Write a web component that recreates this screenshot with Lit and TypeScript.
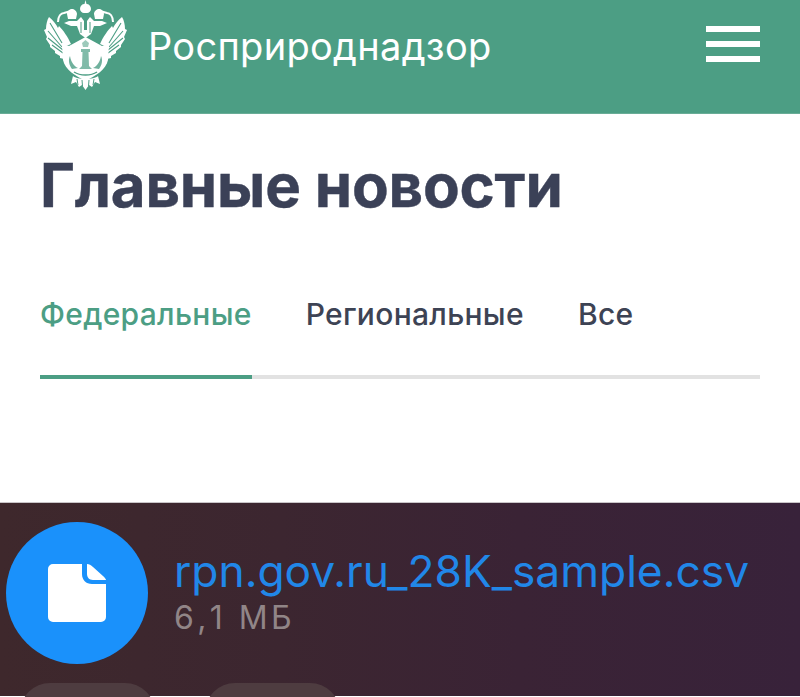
import { LitElement, html, css, svg } from "lit";
import { customElement } from "lit/decorators.js";

const wing = svg`
  <path d="M9 17 C13 20 16 24 18 28 L19 26 C23 30 28 37 31 44 L24 47 L24 59 L20 58 L20 56 L15 53 L15 51 L10 47 L10 45 L6 39 L7 37 L4 30 L6 29 C6 25 7 20 9 17 Z" fill="#fff"/>
  <path d="M10 23 L22 43 M8 31 L22 47 M8 38 L23 50 M12 45 L23 53" stroke="#4c9e84" stroke-width="1.100" fill="none"/>
`;

@customElement("app-root")
export class AppRoot extends LitElement {
  static styles = css`
    :host { display: block; width: 800px; height: 697px; overflow: hidden; background: #fff; font-family: Inter, "Noto Sans", sans-serif; }
    .header { height: 114px; background: #4c9e84; display: flex; align-items: flex-start; padding: 0 40px; box-sizing: border-box; border-bottom: 1px solid #69ac96; }
    .logo { width: 92px; height: 92px; flex: none; }
    .brand { margin: 25px 0 0 16px; flex: 1; color: #fff; font: 400 38px/42px "Inter", sans-serif; letter-spacing: 0.3px; white-space: nowrap; }
    .burger { width: 54px; display: flex; flex-direction: column; gap: 9px; margin-top: 26px; }
    .burger i { display: block; height: 6px; background: #fff; }
    .main { height: 389px; padding: 0 40px; box-sizing: border-box; display: flex; flex-direction: column; }
    h1 { margin: 35px 0 0; color: #3b4157; font: 700 60px/72px "Inter", sans-serif; letter-spacing: -0.2px; white-space: nowrap; -webkit-text-stroke: 0.4px #3b4157; }
    .tabs { margin-top: 75px; display: flex; gap: 54px; font: 500 30px/36px "Inter", sans-serif; letter-spacing: 0.3px; color: #3d4354; border-bottom: 4px solid #e2e2e2; padding-bottom: 43px; }
    .tab { position: relative; }
    .tab.active { color: #4c9e84; }
    .tab.active::after { content: ""; position: absolute; left: 0; right: 0; bottom: -47px; height: 4px; background: #4c9e84; }
    .sheet { height: 194px; margin-top: -1px; background: linear-gradient(90deg, #3e282c 0%, #3c2630 35%, #3a2335 65%, #38223a 100%); box-sizing: border-box; border-top: 1px solid #c9c5c8; padding: 19px 6px 0; }
    .file { display: flex; align-items: flex-start; gap: 26px; }
    .circle { width: 142px; height: 142px; border-radius: 50%; background: #1a91fb; flex: none; display: flex; align-items: center; justify-content: center; }
    .info { padding-top: 23px; }
    .name { color: #2187e8; font: 400 44.3px/52px "Inter", sans-serif; white-space: nowrap; }
    .size { color: #918587; font: 400 32px/36px "Inter", sans-serif; letter-spacing: 3.4px; margin-top: 3px; font-kerning: none; }
    .actions { display: flex; gap: 50px; margin: 19px 0 0 14px; }
    .actions span { display: block; width: 135px; height: 60px; border-radius: 30px; background: #4e3c40; }
  `;

  render() {
    return html`
      <div class="header">
        <svg class="logo" viewBox="0 0 92 92" aria-label="Герб">
          <g>${wing}</g>
          <g transform="translate(91 0) scale(-1 1)">${wing}</g>
          <path d="M18 22 C18 16 21 13 24 13 L31 11 M73 22 C73 16 70 13 67 13 L60 11" stroke="#fff" stroke-width="2" fill="none"/>
          <path d="M45.500 0 L46.500 4 C49 4 51 6 51 9 C51 11 49 13 47 13 H44 C42 13 40 11 40 9 C40 6 42 4 44.500 4 Z" fill="#fff"/>
          <path d="M27 14 C27 11 30 9 32 9 C34 9 37 11 37 14 L36 19 H28 Z M54 14 C54 11 57 9 59 9 C61 9 64 11 64 14 L63 19 H55 Z" fill="#fff"/>
          <path d="M24 23 L29 21 L37 21 L41 17 L44 21 L44 30 L47 30 L47 21 L50 17 L54 21 L62 21 L67 23 L60 26 L54 26 L51 34 L45.500 38 L40 34 L37 26 L31 26 Z" fill="#fff"/>
          <path d="M41 22 L41 33 M50 22 L50 33" stroke="#4c9e84" stroke-width="1"/>
          <path d="M29 46 L45.500 37 L62 46 L69 44 L68 60 C66 70 55 76 45.500 81 C36 76 25 70 23 60 L22 44 Z" fill="#fff"/>
          <path d="M45.500 40 L49 43 L48 47 H43 L42 43 Z" fill="#4c9e84" opacity=".55"/>
          <path d="M41 49 H50 V52 H48.500 L49 66 L52 69 H39 L42 66 L42.500 52 H41 Z" fill="#4c9e84" opacity=".7"/>
          <path d="M30 56 C31 62 34 66 38 68 L32 69 C29 65 28 60 30 56 Z M61 56 C60 62 57 66 53 68 L59 69 C62 65 63 60 61 56 Z" fill="#4c9e84" opacity=".8"/>
          <path d="M34 72 C40 76 51 76 57 72" stroke="#4c9e84" stroke-width="1.500" fill="none"/>
          <path d="M33 76 C37 80 54 80 58 76 L60 84 L55 82 L52 87 L49 85 L45.500 90 L42 85 L39 87 L36 82 L31 84 Z" fill="#fff"/>
          <path d="M37 79 L38 85 M42 80 L42.500 86 M49 80 L48.500 86 M54 79 L53 85" stroke="#4c9e84" stroke-width="1"/>
        </svg>
        <div class="brand">Росприроднадзор</div>
        <div class="burger"><i></i><i></i><i></i></div>
      </div>
      <div class="main">
        <h1>Главные новости</h1>
        <div class="tabs">
          <div class="tab active">Федеральные</div>
          <div class="tab">Региональные</div>
          <div class="tab">Все</div>
        </div>
      </div>
      <div class="sheet">
        <div class="file">
          <div class="circle">
            <svg width="58" height="58" viewBox="0 0 58 58">
              <path d="M5 0 H34 V10 C34 16 38 20 44 20 H58 V53 A5 5 0 0 1 53 58 H5 A5 5 0 0 1 0 53 V5 A5 5 0 0 1 5 0 Z" fill="#fff"/>
              <path d="M39 0 C41 0 43 1 45 3 L55 12 C57 14 58 15 58 16 H45 C41 16 39 13 39 10 Z" fill="#fff"/>
            </svg>
          </div>
          <div class="info">
            <div class="name">rpn.gov.ru_28K_sample.csv</div>
            <div class="size">6,1 МБ</div>
          </div>
        </div>
        <div class="actions"><span></span><span></span></div>
      </div>
    `;
  }
}
